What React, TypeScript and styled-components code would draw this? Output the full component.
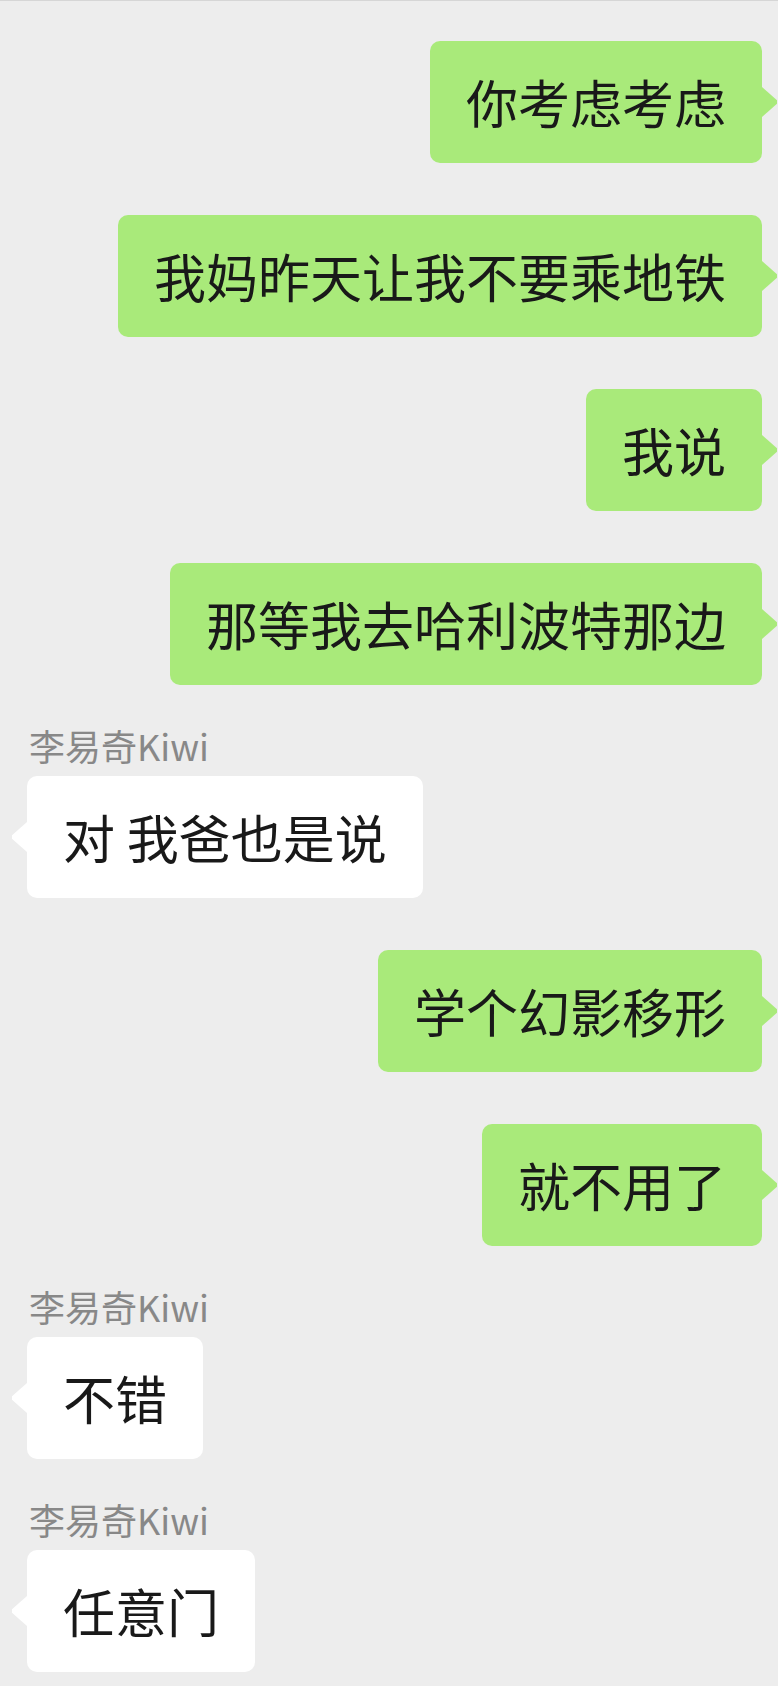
import React from 'react';
import styled, { createGlobalStyle } from 'styled-components';

const GlobalStyle = createGlobalStyle`
  html, body {
    margin: 0;
    padding: 0;
    background: #ededed;
  }
  body {
    font-family: "Noto Sans CJK SC", "Noto Sans", sans-serif;
  }
`;

const colors = {
  bg: '#ededed',
  green: '#a9ea7a',
  white: '#ffffff',
  text: '#191919',
  name: '#888888',
  line: '#d6d6d6',
};

const Screen = styled.div`
  width: 778px;
  min-height: 1686px;
  box-sizing: border-box;
  background: ${colors.bg};
  border-top: 1px solid ${colors.line};
  padding: 40px 16px 0 27px;
  display: flex;
  flex-direction: column;
`;

const Row = styled.div<{ $mine: boolean; $tight: boolean }>`
  display: flex;
  flex-direction: column;
  align-items: ${({ $mine }) => ($mine ? 'flex-end' : 'flex-start')};
  margin-top: ${({ $tight }) => ($tight ? 42 : 52)}px;
  &:first-child {
    margin-top: 0;
  }
`;

const Name = styled.div`
  font-size: 36px;
  line-height: 36px;
  color: ${colors.name};
  margin: 0 0 13px 2px;
  white-space: nowrap;
`;

const Bubble = styled.div<{ $mine: boolean }>`
  position: relative;
  box-sizing: border-box;
  height: 122px;
  padding: 30px 36px;
  border-radius: 10px;
  font-size: 52px;
  line-height: 62px;
  color: ${colors.text};
  white-space: pre;
  background: ${({ $mine }) => ($mine ? colors.green : colors.white)};

  &::after {
    content: '';
    position: absolute;
    top: 46px;
    width: 15px;
    height: 30px;
    background: inherit;
    ${({ $mine }) =>
      $mine
        ? `right: -15px;
           clip-path: polygon(0 0, 100% 44%, 100% 56%, 0 100%);`
        : `left: -15px;
           clip-path: polygon(100% 0, 0 44%, 0 56%, 100% 100%);`}
  }
`;

type Msg = { text: string; mine: boolean; name?: string };

const messages: Msg[] = [
  { text: '你考虑考虑', mine: true },
  { text: '我妈昨天让我不要乘地铁', mine: true },
  { text: '我说', mine: true },
  { text: '那等我去哈利波特那边', mine: true },
  { text: '对 我爸也是说', mine: false, name: '李易奇Kiwi' },
  { text: '学个幻影移形', mine: true },
  { text: '就不用了', mine: true },
  { text: '不错', mine: false, name: '李易奇Kiwi' },
  { text: '任意门', mine: false, name: '李易奇Kiwi' },
];

const App = () => (
  <>
    <GlobalStyle />
    <Screen>
      {messages.map((m, i) => (
        <Row key={i} $mine={m.mine} $tight={!!m.name}>
          {m.name && <Name>{m.name}</Name>}
          <Bubble $mine={m.mine}>{m.text}</Bubble>
        </Row>
      ))}
    </Screen>
  </>
);

export default App;
